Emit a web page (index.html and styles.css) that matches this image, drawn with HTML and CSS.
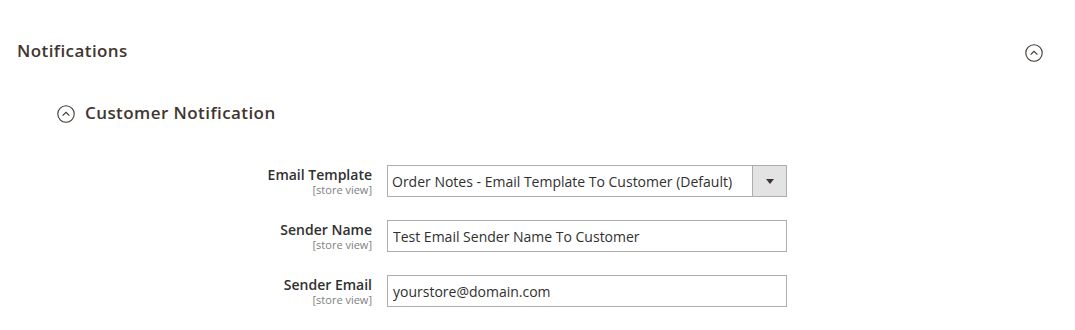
FILE: index.html
```html
<!DOCTYPE html>
<html>
<head>
  <title>Notifications</title>
  <link rel="stylesheet" href="styles.css">
</head>
<body>
  <div class="section-head">
    <span class="section-title">Notifications</span>
    <svg class="toggle toggle-right" width="18" height="18" viewBox="0 0 18 18">
      <circle cx="9" cy="9" r="8.2" fill="none" stroke="#41362f" stroke-width="1.1"/>
      <path d="M5.6 10.6 L9 7.3 L12.4 10.6" fill="none" stroke="#41362f" stroke-width="1.1"/>
    </svg>
  </div>

  <div class="group-head">
    <svg class="toggle" width="18" height="18" viewBox="0 0 18 18">
      <circle cx="9" cy="9" r="8.2" fill="none" stroke="#41362f" stroke-width="1.1"/>
      <path d="M5.6 10.6 L9 7.3 L12.4 10.6" fill="none" stroke="#41362f" stroke-width="1.1"/>
    </svg>
    <span class="group-title">Customer Notification</span>
  </div>

  <div class="fields">
    <div class="field">
      <label class="field-label" for="email_template">
        Email Template
        <span class="scope">[store view]</span>
      </label>
      <div class="select-wrap">
        <select id="email_template" class="control">
          <option>Order Notes - Email Template To Customer (Default)</option>
        </select>
        <span class="select-btn"><span class="arrow"></span></span>
      </div>
    </div>
    <div class="field">
      <label class="field-label" for="sender_name">
        Sender Name
        <span class="scope">[store view]</span>
      </label>
      <input type="text" id="sender_name" class="control" value="Test Email Sender Name To Customer">
    </div>
    <div class="field">
      <label class="field-label" for="sender_email">
        Sender Email
        <span class="scope">[store view]</span>
      </label>
      <input type="text" id="sender_email" class="control" value="yourstore@domain.com">
    </div>
  </div>
</body>
</html>
```

FILE: styles.css
```css
body {
  margin: 0;
  font-family: "Open Sans", "Liberation Sans", sans-serif;
  color: #303030;
  background: #fff;
}
.section-head {
  display: flex;
  justify-content: space-between;
  padding: 39px 32px 0 17px;
}
.section-title,
.group-title {
  font-size: 17px;
  font-weight: 600;
  line-height: 23px;
  letter-spacing: 0.025em;
  color: #41362f;
}
.toggle-right {
  margin-top: 5px;
}
.group-head {
  display: flex;
  align-items: center;
  gap: 10px;
  margin-top: 39px;
  padding-left: 57px;
}
.group-head .toggle {
  margin-top: 2px;
}
.fields {
  margin-top: 41px;
}
.field {
  display: grid;
  grid-template-columns: 372px 400px;
  column-gap: 15px;
  margin-bottom: 23px;
}
.field-label {
  text-align: right;
  font-size: 14px;
  font-weight: 600;
  line-height: 19px;
  color: #303030;
}
.scope {
  display: block;
  font-size: 11px;
  font-weight: 400;
  line-height: 11px;
  color: #808080;
}
.control {
  box-sizing: border-box;
  width: 100%;
  height: 32px;
  margin: 0;
  padding: 0 5px;
  border: 1px solid #adadad;
  border-radius: 0;
  background: #fff;
  font-family: "Open Sans", "Liberation Sans", sans-serif;
  font-size: 14px;
  color: #303030;
  outline: none;
}
.select-wrap {
  display: flex;
}
.select-wrap .control {
  flex: 1;
  min-width: 0;
  -webkit-appearance: none;
  appearance: none;
  padding-left: 4px;
  border-right: none;
}
.select-btn {
  box-sizing: border-box;
  width: 35px;
  height: 32px;
  display: flex;
  align-items: center;
  justify-content: center;
  background: #e3e3e3;
  border: 1px solid #adadad;
}
.arrow {
  width: 0;
  height: 0;
  border-left: 4px solid transparent;
  border-right: 4px solid transparent;
  border-top: 5px solid #41362f;
}
```
